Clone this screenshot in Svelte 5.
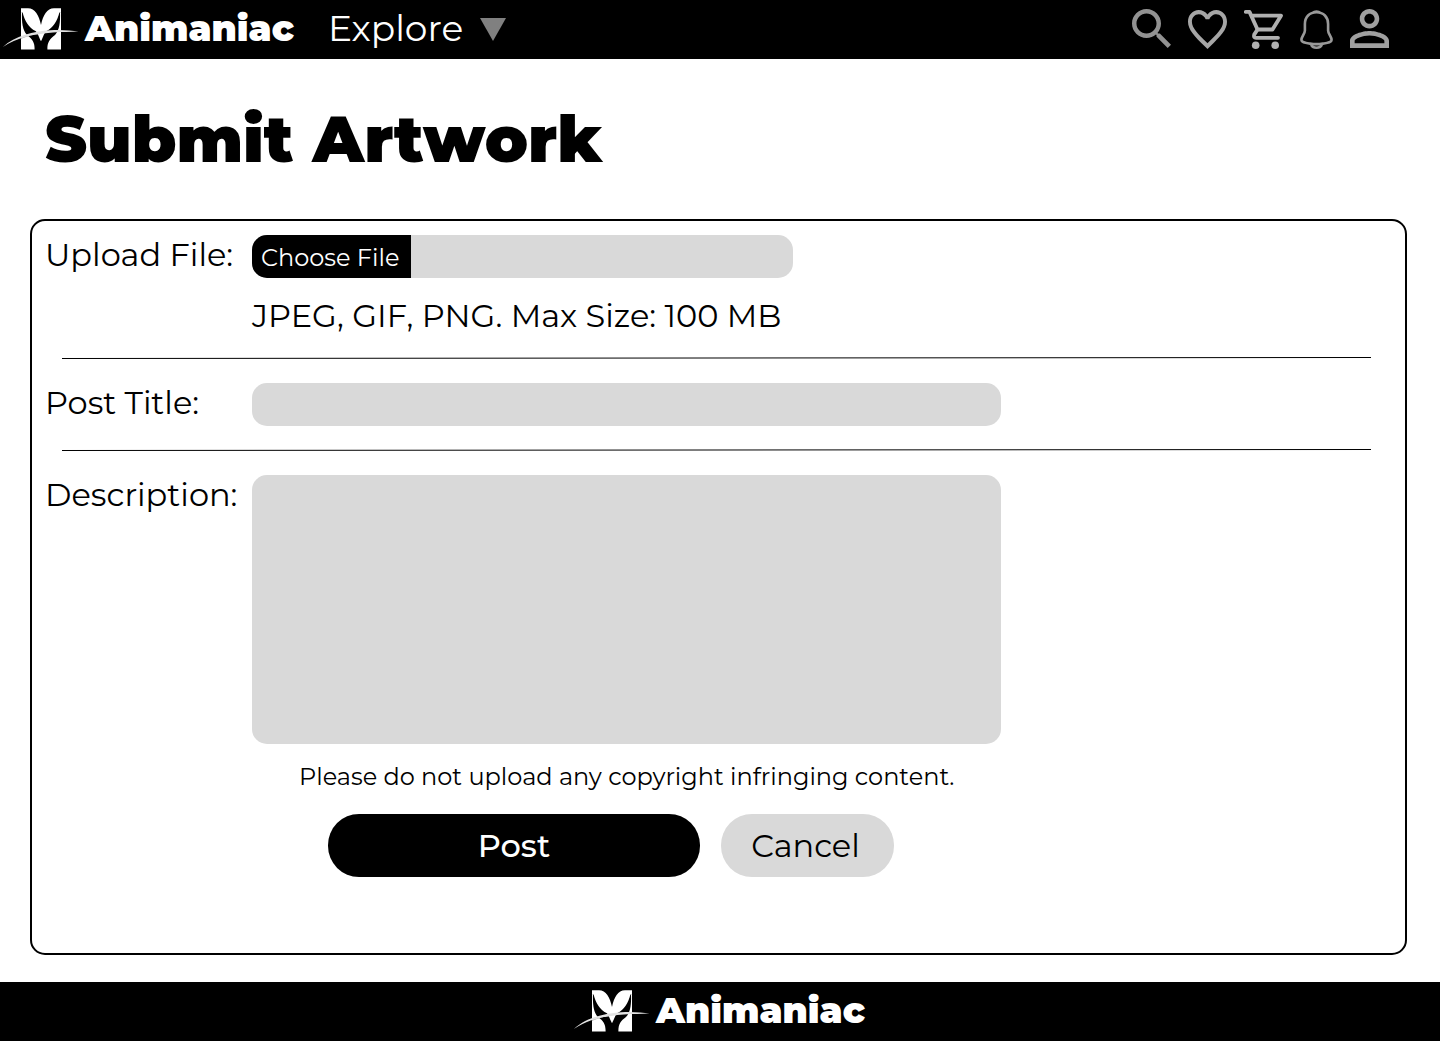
<script>
  let title = $state('');
  let description = $state('');
</script>

{#snippet brand()}
  <div class="brand">
    <svg width="82" height="59" viewBox="0 0 82 59">
      <path fill="#fff" d="M21 8.2H28C35 8.4 39 15 41 25C43 15 47 8.4 54 8.2H61V12.5H59.4C57.4 21 53 28 46.5 31C44.3 32.5 43.3 37 41 41.3C38.7 37 37.7 32.5 35.5 31C29 28 24.6 21 22.6 12.5H21Z" />
      <path fill="#fff" d="M21 12.3H22C21.6 22 22.5 30.5 27 35C32.5 39 34.8 42.5 34.6 49.5H21ZM61 12.3H60C60.4 22 59.5 30.5 55 35C49.5 39 47.2 42.5 47.4 49.5H61Z" />
      <path fill="none" stroke="#777" stroke-width=".7" d="M21 38.4C24 37 28 35.7 32 34.8" />
      <path fill="#e2e2e2" d="M2.8 46.9C15 35.6 34 31.3 50 30.2C62 29.5 71 30.4 78.5 31.6C70 32.2 62 31.8 53 32.4C33 34 17 37.6 2.8 46.9Z" />
    </svg>
    <span class="name">Animaniac</span>
  </div>
{/snippet}

{#snippet divider()}
  <svg class="divider" width="1309" height="2" viewBox="0 0 1309 2">
    <line x1="0" y1="1.5" x2="1309" y2="0.5" stroke="#000" />
  </svg>
{/snippet}

<div class="page">
  <header>
    {@render brand()}
    <nav>
      <span class="explore">Explore</span>
      <svg class="caret" width="26" height="23" viewBox="0 0 26 23"><path d="M0 0H26L13 23Z" fill="#808080" /></svg>
    </nav>
    <div class="icons">
      <svg width="39" height="39" viewBox="3 3 17.49 17.49">
        <path fill="#929292" d="M15.5 14h-.79l-.28-.27C15.41 12.59 16 11.11 16 9.5 16 5.91 13.09 3 9.5 3S3 5.91 3 9.5 5.91 16 9.5 16c1.61 0 3.09-.59 4.23-1.57l.27.28v.79l5 4.99L20.49 19l-4.99-5zm-6 0C7.01 14 5 11.99 5 9.5S7.01 5 9.5 5 14 7.01 14 9.5 11.99 14 9.5 14z" />
      </svg>
      <svg width="39" height="39" viewBox="2 3 20 18.35" preserveAspectRatio="none">
        <path fill="#a6a6a6" d="M16.5 3c-1.74 0-3.41.81-4.5 2.09C10.91 3.81 9.24 3 7.5 3 4.42 3 2 5.42 2 8.5c0 3.78 3.4 6.86 8.55 11.54L12 21.35l1.45-1.32C18.6 15.36 22 12.28 22 8.5 22 5.42 19.58 3 16.5 3zm-4.4 15.55l-.1.1-.1-.1C7.14 14.24 4 11.39 4 8.5 4 6.5 5.5 5 7.5 5c1.54 0 3.04.99 3.57 2.36h1.87C13.46 5.99 14.96 5 16.5 5c2 0 3.5 1.5 3.5 3.5 0 2.89-3.14 5.74-7.9 10.05z" />
      </svg>
      <svg width="39" height="39" viewBox="0 0 39 39">
        <g fill="none" stroke="#b0b0b0" stroke-width="3.8" stroke-linejoin="round" stroke-linecap="round">
          <path d="M1.8 1.9H5.5L13.5 19.5H28.5L37 5.7H8" />
          <path d="M13.5 19.5L10.2 24.6Q9.4 27.8 12 27.8H34" />
        </g>
        <circle cx="11.7" cy="35.2" r="3.8" fill="#b0b0b0" />
        <circle cx="31.2" cy="35.2" r="3.8" fill="#b0b0b0" />
      </svg>
      <svg width="33" height="39" viewBox="0 0 33 39">
        <g fill="none" stroke="#999" stroke-width="2.6">
          <path d="M16.5 2.2C9.5 2.2 4.9 7 4.9 14V20.5C4.9 24 1.4 26.5 1.4 30C1.4 32.4 5 32.8 10 33.6C14 34.3 19 34.3 23 33.6C28 32.8 31.6 32.4 31.6 30C31.6 26.5 28.1 24 28.1 20.5V14C28.1 7 23.5 2.2 16.5 2.2Z" />
          <path d="M11.2 34.3C12.4 38.8 20.6 38.8 21.8 34.3" />
          <path d="M13 2.4C14 .7 19 .7 20 2.4" stroke-width="1.8" />
        </g>
      </svg>
      <svg width="39" height="39" viewBox="4 4 16 16">
        <path fill="#a0a0a0" d="M12 5.9c1.16 0 2.1.94 2.1 2.1s-.94 2.1-2.1 2.1S9.9 9.16 9.9 8s.94-2.1 2.1-2.1m0 9c2.97 0 6.1 1.46 6.1 2.1v1.1H5.9V17c0-.64 3.13-2.1 6.1-2.1M12 4C9.79 4 8 5.79 8 8s1.79 4 4 4 4-1.79 4-4-1.79-4-4-4zm0 9c-2.67 0-8 1.34-8 4v3h16v-3c0-2.66-5.33-4-8-4z" />
      </svg>
    </div>
  </header>

  <main>
    <h1>Submit Artwork</h1>
    <form>
      <section class="upload">
        <label class="caption" for="file">Upload File:</label>
        <div class="controls">
          <div class="file">
            <button type="button" id="file">Choose File</button>
          </div>
          <p>JPEG, GIF, PNG. Max Size: 100 MB</p>
        </div>
      </section>
      {@render divider()}
      <section class="row">
        <label class="caption" for="title">Post Title:</label>
        <input id="title" bind:value={title} />
      </section>
      {@render divider()}
      <section class="row">
        <label class="caption" for="description">Description:</label>
        <textarea id="description" bind:value={description}></textarea>
      </section>
      <p class="notice">Please do not upload any copyright infringing content.</p>
      <div class="actions">
        <button type="button" class="post">Post</button>
        <button type="button" class="cancel">Cancel</button>
      </div>
    </form>
  </main>

  <footer>{@render brand()}</footer>
</div>

<style>
  :global(body) { margin: 0; background: #fff; }
  .page {
    width: 1440px;
    height: 1041px;
    display: flex;
    flex-direction: column;
    overflow: hidden;
    font-family: Montserrat, Inter, sans-serif;
    font-size: 32px;
    white-space: nowrap;
  }
  svg { display: block; flex: none; }

  header, footer {
    height: 59px;
    flex: none;
    background: #000;
    color: #fff;
    font-size: 36px;
    line-height: 56px;
    display: flex;
  }
  footer { padding-left: 571px; }
  .brand { display: flex; gap: 3px; }
  .name { width: 209px; font-weight: 900; }
  nav { display: flex; margin-left: 34px; }
  .explore { width: 152px; }
  .caret { margin-top: 18px; }
  .icons {
    display: flex;
    align-items: flex-start;
    gap: 17px;
    margin: 9px 51px 0 auto;
  }
  .icons svg { margin-top: 1px; }
  .icons svg:first-child, .icons svg:last-child { margin-top: 0; }

  main { flex: 1; padding: 41px 33px 0 30px; }
  h1 {
    margin: 0 0 39px 15px;
    height: 80px;
    font-size: 64px;
    font-weight: 900;
    line-height: 78px;
  }
  form {
    box-sizing: border-box;
    width: 1377px;
    height: 736px;
    border: 2px solid #000;
    border-radius: 15px;
    padding-top: 14px;
  }
  p { margin: 0; line-height: 75px; }
  section { display: flex; }
  .caption { width: 220px; padding-left: 13px; box-sizing: border-box; line-height: 39px; }
  .upload { height: 122px; }
  .row { padding: 24px 0 23px; }
  .row:has(textarea) { padding-bottom: 0; }
  .file {
    width: 541px;
    height: 43px;
    border-radius: 15px;
    overflow: hidden;
    background: #d9d9d9;
  }
  button { border: 0; padding: 0; font: inherit; }
  .file button {
    display: block;
    width: 159px;
    height: 43px;
    padding: 2px 0 0 9px;
    background: #000;
    color: #fff;
    font-size: 24px;
    line-height: 41px;
    text-align: left;
  }
  input, textarea {
    box-sizing: border-box;
    width: 749px;
    border: 0;
    border-radius: 15px;
    background: #d9d9d9;
    padding: 8px 14px;
    font: 24px Montserrat, Inter, sans-serif;
  }
  input { height: 43px; }
  textarea { height: 269px; resize: none; }
  .divider { margin-left: 30px; }
  .notice { padding-left: 267px; height: 70px; font-size: 24px; line-height: 65px; }
  .actions { display: flex; gap: 21px; padding-left: 296px; }
  .actions button { height: 63px; border-radius: 31px; line-height: 63px; }
  .actions .post { width: 372px; background: #000; color: #fff; font-weight: 500; }
  .actions .cancel { width: 173px; padding-right: 4px; background: #d9d9d9; color: #000; }
</style>
